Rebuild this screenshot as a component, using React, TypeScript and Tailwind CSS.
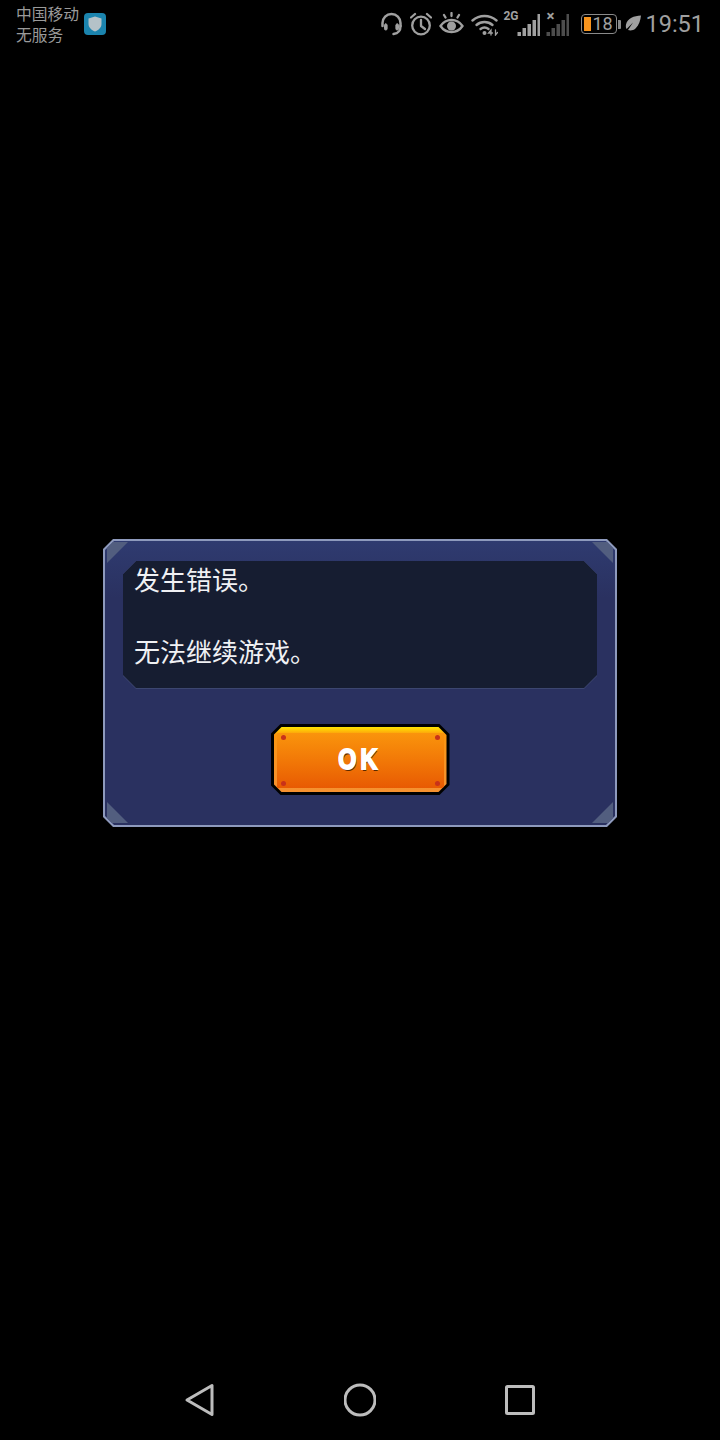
import React from 'react';

const CJK = 'font-["Noto_Sans_CJK_SC","Noto_Sans",sans-serif]';

// status bar icons, all drawn on the same grey
const Headset = () => (
  <svg width="23" height="24" viewBox="0 0 23 24" fill="none" stroke="#a0a0a0" strokeWidth="2.500" strokeLinecap="round">
    <path d="M2.500 14V11a9 9 0 0 1 18 0v3" />
    <path d="M20.500 14c0 4-1 7-7 8" />
    <rect x="4.500" y="12" width="2.600" height="6" rx="1.200" fill="#a0a0a0" strokeWidth="1" />
    <rect x="15.900" y="12" width="2.600" height="6" rx="1.200" fill="#a0a0a0" strokeWidth="1" />
  </svg>
);

const Alarm = () => (
  <svg width="22" height="24" viewBox="0 0 22 24" fill="none" stroke="#a0a0a0" strokeWidth="2.300" strokeLinecap="round" strokeLinejoin="round">
    <circle cx="11" cy="13.500" r="8.800" />
    <path d="M11 8v6l4 3" />
    <path d="M1 5.500 5 2M21 5.500 17 2" />
  </svg>
);

const Eye = () => (
  <svg width="25" height="24" viewBox="0 0 25 24" fill="none" stroke="#a0a0a0" strokeWidth="2.300" strokeLinecap="round">
    <path d="M1.500 14c3-4.500 7-6 11-6s8 1.500 11 6c-3 4.500-7 6-11 6s-8-1.500-11-6Z" />
    <circle cx="12.500" cy="14" r="4.500" fill="#a0a0a0" stroke="none" />
    <path d="M12.500 4V1M6.500 5.500 5 3M18.500 5.500 20 3" />
  </svg>
);

const Wifi = () => (
  <svg width="27" height="24" viewBox="0 0 27 24" fill="none" stroke="#a0a0a0" strokeWidth="2.400" strokeLinecap="round">
    <path d="M1.500 8.500c7-6 17-6 24 0" />
    <path d="M5.500 13c4.500-4 11.500-4 16 0" />
    <path d="M9.500 17c2.500-2 5.500-2 8 0" />
    <circle cx="13.500" cy="21" r="2" fill="#a0a0a0" stroke="none" />
    <path d="M20 23v-5l-2.500 3h4M24.500 18v5l2-2.500" strokeWidth="1.300" />
  </svg>
);

const Signal = ({ bars, dim }: { bars: number[]; dim?: boolean }) => (
  <svg width="23" height="24" viewBox="0 0 23 24">
    {bars.map((h, i) => (
      <rect key={i} x={i * 5 + 0.5} y={24 - h} width="3.500" height={h} fill={dim ? '#4d4d4d' : '#a0a0a0'} />
    ))}
  </svg>
);

const Battery = () => (
  <div className="flex items-center">
    <div className="relative flex h-[20px] w-[36px] items-center rounded-[4px] border-[1.500px] border-[#8a8a8a] pl-[2px]">
      <div className="h-[14px] w-[7px] bg-[#f7941d]" />
      <span className="ml-[1px] font-['Roboto',sans-serif] text-[18px] leading-none text-[#a0a0a0]">18</span>
    </div>
    <div className="ml-[1px] h-[9px] w-[3px] rounded-r-[1px] bg-[#8a8a8a]" />
  </div>
);

const Leaf = () => (
  <svg width="16" height="18" viewBox="0 0 16 18">
    <path d="M16 0.500C9 1 2.500 3 1 9.500c-.4 2 0 3.500.6 4.500L8 7.500 3 15c2 .8 5 .8 7.500-1.500C14 10 15.500 5 16 0.500Z" fill="#a0a0a0" />
  </svg>
);

const StatusBar = () => (
  <div className="flex h-[48px] items-start justify-between pl-[16px] pr-[16px]">
    <div className="flex items-center pt-[3px]">
      <div className={`${CJK} text-[15.750px] leading-[21px] text-[#9a9a9a]`}>
        <div>中国移动</div>
        <div>无服务</div>
      </div>
      <div className="ml-[5px] flex h-[22px] w-[22px] items-center justify-center rounded-[4px] bg-[#1b84ae]">
        <svg width="14" height="16" viewBox="0 0 14 16">
          <path d="M7 0.500 13.500 2.500V8c0 3.500-3 6-6.500 7.500C3.500 14 .5 11.500.5 8V2.500Z" fill="#b4c2c8" />
        </svg>
      </div>
    </div>
    <div className="flex items-center pt-[12px]">
      <Headset />
      <div className="ml-[7px]"><Alarm /></div>
      <div className="ml-[7px]"><Eye /></div>
      <div className="ml-[7px]"><Wifi /></div>
      <div className="relative ml-[19px]">
        <span className="absolute left-[-14px] top-[-2px] font-['Roboto',sans-serif] text-[12px] font-bold leading-none text-[#a0a0a0]">2G</span>
        <Signal bars={[4, 8, 12, 16, 22]} />
      </div>
      <div className="relative ml-[6px]">
        <span className="absolute left-[0px] top-[-3px] font-['Roboto',sans-serif] text-[15px] font-bold leading-none text-[#a0a0a0]">×</span>
        <Signal bars={[4, 8, 12, 16, 22]} dim />
      </div>
      <div className="ml-[12px]"><Battery /></div>
      <div className="ml-[4px]"><Leaf /></div>
      <span className="ml-[4px] font-['Roboto',sans-serif] text-[23.500px] leading-[24px] text-[#a0a0a0]">19:51</span>
    </div>
  </div>
);

const Corner = ({ className }: { className: string }) => (
  <div className={`absolute h-[21px] w-[21px] bg-[#525e7f] ${className}`} />
);

const Rivet = ({ className }: { className: string }) => (
  <div className={`absolute h-[5px] w-[5px] rounded-full bg-[#c8321a] ${className}`} />
);

const OkButton = () => (
  <div className="h-[71px] w-[179px] bg-black p-[3px] [clip-path:polygon(10px_0,169px_0,179px_10px,179px_61px,169px_71px,10px_71px,0_61px,0_10px)]">
    <div className="h-full w-full bg-gradient-to-b from-[#ffe600] via-[#fb950c] via-12% to-[#f59130] px-[3px] pb-[4px] pt-[6px] [clip-path:polygon(8px_0,165px_0,173px_8px,173px_57px,165px_65px,8px_65px,0_57px,0_8px)]">
      <div className="relative flex h-full w-full items-center justify-center bg-gradient-to-b from-[#fa940c] to-[#e85a03]">
        <Rivet className="left-[4px] top-[2px]" />
        <Rivet className="right-[4px] top-[2px]" />
        <Rivet className="bottom-[2px] left-[4px]" />
        <Rivet className="bottom-[2px] right-[4px]" />
        <span className="mb-[3px] scale-x-80 font-['Liberation_Sans',sans-serif] text-[29px] font-bold leading-none tracking-[5px] text-white [-webkit-text-stroke:2px_white] [text-shadow:1px_2px_0_#5c2a00]">
          OK
        </span>
      </div>
    </div>
  </div>
);

const ErrorDialog = () => (
  <div className="h-[288px] w-[514px] bg-[#8e9abd] p-[2px] [clip-path:polygon(10px_0,504px_0,514px_10px,514px_278px,504px_288px,10px_288px,0_278px,0_10px)]">
    <div className="relative h-full w-full bg-gradient-to-b from-[#2f3b70] via-[#2a3160] via-20% to-[#2a3160] px-[18px] pt-[20px] [clip-path:polygon(9px_0,501px_0,510px_9px,510px_275px,501px_284px,9px_284px,0_275px,0_9px)]">
      <Corner className="left-[2px] top-[1px] [clip-path:polygon(0_0,100%_0,0_100%)]" />
      <Corner className="right-[2px] top-[1px] [clip-path:polygon(0_0,100%_0,100%_100%)]" />
      <Corner className="bottom-[2px] left-[2px] [clip-path:polygon(0_0,100%_100%,0_100%)]" />
      <Corner className="bottom-[2px] right-[2px] [clip-path:polygon(100%_0,100%_100%,0_100%)]" />
      <div className="bg-[#3c4670] pb-[1px] [clip-path:polygon(13px_0,461px_0,474px_13px,474px_115px,461px_128px,13px_128px,0_115px,0_13px)]">
        <div className={`${CJK} h-[127px] bg-[#161d31] pl-[11px] text-[26px] leading-[36px] text-[#f0f1f4] [clip-path:polygon(13px_0,461px_0,474px_13px,474px_114px,461px_127px,13px_127px,0_114px,0_13px)]`}>
          <p>发生错误。</p>
          <p>&nbsp;</p>
          <p>无法继续游戏。</p>
        </div>
      </div>
      <div className="mt-[35px] flex justify-center">
        <OkButton />
      </div>
    </div>
  </div>
);

const NavBar = () => (
  <div className="flex h-[80px] items-center justify-center gap-[128px]">
    <svg width="32" height="34" viewBox="0 0 32 34" fill="none" stroke="#bdbdbd" strokeWidth="3" strokeLinejoin="round">
      <path d="M28 2.500V31.500L3 17Z" />
    </svg>
    <svg width="32" height="34" viewBox="0 0 32 34" fill="none" stroke="#bdbdbd" strokeWidth="3">
      <circle cx="16" cy="17" r="15" />
    </svg>
    <svg width="32" height="34" viewBox="0 0 32 34" fill="none" stroke="#bdbdbd" strokeWidth="3" strokeLinejoin="round">
      <rect x="2.500" y="3.500" width="27" height="27" rx="1" />
    </svg>
  </div>
);

export default function App() {
  return (
    <div className="flex h-[1440px] w-[720px] flex-col bg-black">
      <StatusBar />
      <div className="flex flex-1 justify-center pt-[491px]">
        <ErrorDialog />
      </div>
      <NavBar />
    </div>
  );
}
